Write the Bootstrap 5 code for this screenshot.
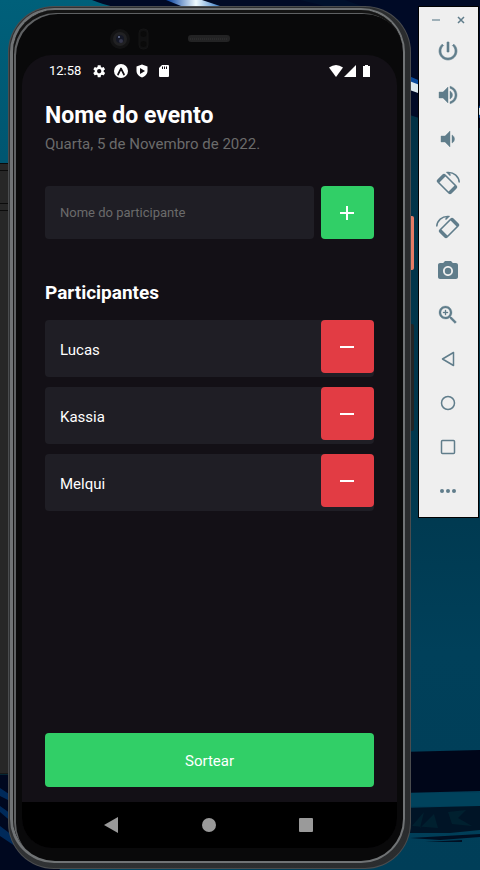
<!DOCTYPE html>
<html lang="pt-BR">
<head>
<meta charset="utf-8">
<meta name="viewport" content="width=device-width, initial-scale=1">
<title>Nome do evento</title>
<link href="https://cdn.jsdelivr.net/npm/bootstrap@5.3.0/dist/css/bootstrap.min.css" rel="stylesheet">
<style>
  body { font-family: Roboto, "Liberation Sans", sans-serif; background: #003a50; color: #fff; }
  .wallpaper { z-index: -1; }
  .desktop { padding: 6px 1px 1px 8px; gap: 7px; }

  .frame { background: #4a4c4e; padding: 1px; border-radius: 46px; }
  .rail { background: linear-gradient(90deg, #303234, #2a2c2e); padding: 1px 5px 5px 1px; border-radius: 45px; }
  .rim { background: #707375; padding: 2px 2px 2px 3px; border-radius: 44px; }
  .bezel { background: #09090a; padding: 0 6px 13px 9px; border-radius: 42px; box-shadow: inset 1px 3px 0 #141414, inset 3px 4px 0 #5f6163; }
  .sensors { height: 45px; }
  .side-key { left: 100%; width: 3px; border-radius: 0 2px 2px 0; }
  .key-power { top: 210px; height: 54px; background: #e57c66; }
  .key-volume { top: 318px; height: 107px; background: #222425; }

  .screen { background: #131016; border-radius: 30px; }
  .status { padding: 0 25px 0 27px; height: 32px; font-size: 13px; line-height: 20px; gap: 10px; }
  .app-body { padding: 15px 23px 15px; }
  .event-title { font-size: 23px; line-height: 28px; }
  .event-date { font-size: 15px; line-height: 20px; color: #6b6b6b; margin: 4px 0 32px; }
  .entry { gap: 7px; }
  .entry .form-control { height: 53px; padding: 0 15px; background: #1f1e25; border: 0; border-radius: 4px; color: #fff; font-size: 13px; }
  .entry .form-control::placeholder { color: #6b6b6b; opacity: 1; }
  .square-btn { width: 53px; height: 53px; border: 0; border-radius: 4px; }
  .add-btn { background: #31cf67; }
  .remove-btn { background: #e23c44; }
  .list-title { font-size: 19px; line-height: 24px; margin: 42px 0 15px; }
  .people { gap: 10px; }
  .person { height: 57px; background: #1f1e25; border-radius: 4px; padding-left: 15px; font-size: 15px; line-height: 60px; }
  .draw-btn { height: 54px; background: #31cf67; border: 0; border-radius: 4px; color: #fff; font-size: 15px; padding: 8px 0 6px; }
  .draw-btn:hover { background: #2bbd5d; color: #fff; }
  .sysnav { background: #000; height: 46px; padding: 0 42px 1px 40px; }
  .sysnav button, .tools button { background: none; border: 0; padding: 0; }

  .tools { width: 61px; background: #efefef; border: 1px solid #000; color: #607d8b; padding: 0 2px 4px 0; }
  .window-keys { height: 22px; padding: 3px 3px 0 4px; }
  .tool-btn { height: 44px; color: inherit; }
</style>
</head>
<body>
<svg class="wallpaper position-fixed top-0 start-0 w-100 h-100" viewBox="0 0 480 870" preserveAspectRatio="none" aria-hidden="true">
  <defs>
    <linearGradient id="sea" x1="0" y1="0" x2="0" y2="1"><stop offset="0" stop-color="#00607a"/><stop offset=".2" stop-color="#005570"/><stop offset=".6" stop-color="#003c54"/><stop offset="1" stop-color="#004560"/></linearGradient>
    <linearGradient id="east" x1="0" y1="0" x2="0" y2="1"><stop offset="0" stop-color="#002c3e"/><stop offset=".2" stop-color="#003348"/><stop offset=".55" stop-color="#00384e"/><stop offset=".75" stop-color="#00405a"/><stop offset="1" stop-color="#003e58"/></linearGradient>
    <linearGradient id="beam" x1="0" y1="0" x2="1" y2="0"><stop offset="0" stop-color="#003c9c"/><stop offset=".5" stop-color="#f0fbff"/><stop offset="1" stop-color="#0a5cb8"/></linearGradient>
  </defs>
  <rect width="480" height="870" fill="url(#sea)"/>
  <rect x="240" width="240" height="870" fill="url(#east)"/>
  <path d="M92 0H480V128Q440 126 400 112L150 14Q112 8 92 0z" fill="#000a26"/>
  <path d="M166 0H202L226 8H186z" fill="url(#beam)"/>
  <path d="M300 0Q380 18 410 50L400 20 345 0z" fill="#00102c"/>
  <path d="M404 74L480 106V118L404 86z" fill="#0a4a9a"/>
  <path d="M404 79L480 108V115L404 88z" fill="#dce9ee"/>
  <rect y="163" width="9" height="611" fill="#272727"/>
  <path d="M0 163.500H9M0 170.500H9M0 203.500H9M0 210.500H9M0 774H9" stroke="#0b0b0b"/>
  <path d="M0 775H9L60 870H0z" fill="#00081f"/>
  <path d="M0 788L12 796V802L0 796zM0 806L14 816V824L0 812zM0 826L24 844V852L0 836z" fill="#002a5a"/>
  <path d="M400 752L480 750V791L400 793z" fill="#000619"/>
  <path d="M400 793H480V806H400z" fill="#00425c"/>
  <path d="M400 808L480 806V830L450 833H400z" fill="#001426"/>
  <path d="M412 826L424 812L420 828L434 814L438 828zM448 812L466 810L458 818L472 826L452 824z" fill="#00202f"/>
  <path d="M410 838L480 834V837L440 840zM425 842L462 840V842z" fill="#000f22"/>
</svg>

<div class="desktop d-flex align-items-start min-vh-100">
  <div class="frame position-relative d-flex flex-column flex-fill align-self-stretch">
    <span class="side-key key-power position-absolute"></span>
    <span class="side-key key-volume position-absolute"></span>
    <div class="rail d-flex flex-column flex-fill">
      <div class="rim d-flex flex-column flex-fill">
        <div class="bezel d-flex flex-column flex-fill">
          <div class="sensors d-flex justify-content-center">
            <svg width="240" height="45" viewBox="0 0 240 45" aria-hidden="true">
              <circle cx="30" cy="29" r="10" fill="#131314"/><circle cx="30" cy="29" r="7" fill="#212123"/><circle cx="30" cy="29" r="4" fill="#141725"/><circle cx="31" cy="31" r="2" fill="#34364a"/><circle cx="29" cy="27" r="1" fill="#6d7899"/>
              <rect x="49" y="19" width="9" height="20" rx="4" fill="#101011" stroke="#141415"/><circle cx="53.500" cy="24" r="3" fill="#0a0a0a"/><circle cx="53.500" cy="34" r="3" fill="#0a0a0a"/>
              <rect x="98" y="25" width="42" height="7" rx="3" fill="#232324"/><path d="M100 29h38" stroke="#2b2b2c" stroke-width="2" stroke-dasharray="1 1"/>
            </svg>
          </div>

          <div class="screen d-flex flex-column flex-fill overflow-hidden">
            <div class="status d-flex align-items-center">
              <span>12:58</span>
              <svg width="84" height="16" viewBox="0 0 84 16" fill="#fff" aria-hidden="true">
                <g transform="translate(1 1) scale(.6)"><path d="M19.430 12.980c.04-.32.07-.64.07-.98s-.03-.66-.07-.98l2.110-1.650c.19-.15.24-.42.12-.64l-2-3.460c-.12-.22-.39-.3-.61-.22l-2.490 1c-.52-.4-1.080-.73-1.690-.98l-.38-2.650C14.460 2.180 14.250 2 14 2h-4c-.25 0-.46.18-.49.42l-.38 2.650c-.61.25-1.170.59-1.690.98l-2.490-1c-.23-.09-.49 0-.61.22l-2 3.460c-.13.22-.07.49.12.64l2.110 1.650c-.04.32-.07.65-.07.98s.03.66.07.98l-2.110 1.650c-.19.15-.24.42-.12.64l2 3.460c.12.22.39.3.61.22l2.490-1c.52.4 1.080.73 1.690.98l.38 2.650c.03.24.24.42.49.42h4c.25 0 .46-.18.49-.42l.38-2.650c.61-.25 1.170-.59 1.690-.98l2.490 1c.23.09.49 0 .61-.22l2-3.460c.12-.22.07-.49-.12-.64l-2.110-1.650zM12 15.500c-1.930 0-3.500-1.570-3.500-3.500s1.570-3.500 3.500-3.500 3.500 1.570 3.500 3.500-1.570 3.500-3.500 3.500z"/></g>
                <circle cx="30" cy="8" r="7"/><path d="M27 11.500L30 5.500L33 11.500" fill="none" stroke="#131016" stroke-width="1.700" stroke-linecap="round" stroke-linejoin="round"/>
                <path d="M51 1.500L56.500 3.500V8C56.500 11 54 13.500 51 14.500C48 13.500 45.500 11 45.500 8V3.500z"/><path d="M49 5L54 8L49 11z" fill="#131016"/>
                <path d="M71 2h6a1 1 0 0 1 1 1v10a1 1 0 0 1-1 1h-8a1 1 0 0 1-1-1V5z"/><path d="M71.500 3.500v2.500M73.500 3.500v2.500M75.500 3.500v2.500" stroke="#131016"/>
              </svg>
              <svg class="ms-auto" width="43" height="14" viewBox="0 0 43 14" fill="#fff" aria-hidden="true"><path d="M0 3.500Q7 -1.500 14 3.500L7 13z"/><path d="M15 13L27 1V13z"/><path d="M34 2h2V1h3v1h2v11h-7z"/></svg>
            </div>

            <main class="app-body d-flex flex-column flex-fill">
              <h1 class="event-title fw-bold m-0">Nome do evento</h1>
              <p class="event-date">Quarta, 5 de Novembro de 2022.</p>
              <form class="entry d-flex" onsubmit="return false">
                <input type="text" class="form-control flex-fill" placeholder="Nome do participante" aria-label="Nome do participante">
                <button type="button" class="square-btn add-btn flex-shrink-0 d-flex align-items-center justify-content-center p-0" aria-label="Adicionar"><svg width="15" height="15" viewBox="0 0 15 15" stroke="#fff" stroke-width="2"><path d="M7 1V15M0 8H14"/></svg></button>
              </form>
              <h2 class="list-title fw-bold">Participantes</h2>
              <ul class="people list-unstyled d-flex flex-column mb-4">
                <li class="person d-flex justify-content-between"><span>Lucas</span><button type="button" class="square-btn remove-btn d-flex align-items-center justify-content-center p-0" aria-label="Remover Lucas"><svg width="15" height="15" viewBox="0 0 15 15" stroke="#fff" stroke-width="2"><path d="M0 8H14"/></svg></button></li>
                <li class="person d-flex justify-content-between"><span>Kassia</span><button type="button" class="square-btn remove-btn d-flex align-items-center justify-content-center p-0" aria-label="Remover Kassia"><svg width="15" height="15" viewBox="0 0 15 15" stroke="#fff" stroke-width="2"><path d="M0 8H14"/></svg></button></li>
                <li class="person d-flex justify-content-between"><span>Melqui</span><button type="button" class="square-btn remove-btn d-flex align-items-center justify-content-center p-0" aria-label="Remover Melqui"><svg width="15" height="15" viewBox="0 0 15 15" stroke="#fff" stroke-width="2"><path d="M0 8H14"/></svg></button></li>
              </ul>
              <button type="button" class="draw-btn btn w-100 mt-auto">Sortear</button>
            </main>

            <nav class="sysnav d-flex" aria-label="Sistema">
              <button type="button" class="flex-fill" aria-label="Voltar"><svg width="16" height="16" viewBox="0 0 16 16" fill="#9a9a9a"><path d="M1 8L15 0V16z"/></svg></button>
              <button type="button" class="flex-fill" aria-label="Início"><svg width="16" height="16" viewBox="0 0 16 16" fill="#9a9a9a"><circle cx="8" cy="8" r="7"/></svg></button>
              <button type="button" class="flex-fill" aria-label="Recentes"><svg width="16" height="16" viewBox="0 0 16 16" fill="#9a9a9a"><rect x="1" y="1" width="14" height="14" rx="1"/></svg></button>
            </nav>
          </div>
        </div>
      </div>
    </div>
  </div>

  <aside class="tools d-flex flex-column flex-shrink-0" aria-label="Emulador">
    <div class="window-keys d-flex align-items-center">
      <button type="button" class="flex-fill d-flex justify-content-center" aria-label="Minimizar"><svg width="8" height="8" viewBox="0 0 8 8"><path d="M0 4H8" stroke="#9fb0b8" stroke-width="2"/></svg></button>
      <button type="button" class="flex-fill d-flex justify-content-center" aria-label="Fechar"><svg width="8" height="8" viewBox="0 0 8 8"><path d="M1 1L7 7M7 1L1 7" stroke="#607d8b" stroke-width="1.500"/></svg></button>
    </div>
    <button type="button" class="tool-btn" aria-label="Energia"><svg width="24" height="24" viewBox="0 0 24 24" fill="currentColor"><path d="M13 3h-2v10h2V3zm4.830 2.170l-1.420 1.420C17.990 7.860 19 9.810 19 12c0 3.870-3.130 7-7 7s-7-3.130-7-7c0-2.190 1.010-4.140 2.580-5.420L6.170 5.170C4.230 6.820 3 9.260 3 12c0 4.970 4.030 9 9 9s9-4.030 9-9c0-2.740-1.230-5.180-3.170-6.830z" stroke="currentColor" stroke-width=".6"/></svg></button>
    <button type="button" class="tool-btn" aria-label="Aumentar volume"><svg width="24" height="24" viewBox="0 0 24 24" fill="currentColor"><path d="M3 9v6h4l5 5V4L7 9H3zm13.500 3c0-1.770-1.020-3.290-2.500-4.030v8.050c1.480-.73 2.500-2.250 2.500-4.020zM14 3.230v2.060c2.890.86 5 3.540 5 6.710s-2.110 5.850-5 6.710v2.060c4.010-.91 7-4.490 7-8.770s-2.990-7.860-7-8.770z" stroke="currentColor" stroke-width=".4"/></svg></button>
    <button type="button" class="tool-btn" aria-label="Diminuir volume"><svg width="24" height="24" viewBox="0 0 24 24" fill="currentColor"><path d="M18.500 12c0-1.770-1.020-3.290-2.500-4.030v8.050c1.480-.73 2.500-2.250 2.500-4.020zM5 9v6h4l5 5V4L9 9H5z" stroke="currentColor" stroke-width=".4"/></svg></button>
    <button type="button" class="tool-btn" aria-label="Girar à esquerda"><svg width="26" height="26" viewBox="-1 -1 26 26" fill="none" stroke="currentColor"><path d="M2 9L7 4Q8 3 9 4L20 15Q21 16 20 17L15 22Q14 23 13 22L2 11Q1 10 2 9z" stroke-width="1.600"/><path d="M13 22L20 15M2 11L9 4" stroke-width="2.600"/><path d="M14.500 4.500L11.500 1.500C18 1 23 5.500 23.300 11.500" stroke-width="1.500"/></svg></button>
    <button type="button" class="tool-btn" aria-label="Girar à direita"><svg width="26" height="26" viewBox="-1 -1 26 26" fill="none" stroke="currentColor"><g transform="matrix(-1 0 0 1 24 0)"><path d="M2 9L7 4Q8 3 9 4L20 15Q21 16 20 17L15 22Q14 23 13 22L2 11Q1 10 2 9z" stroke-width="1.600"/><path d="M13 22L20 15M2 11L9 4" stroke-width="2.600"/><path d="M14.500 4.500L11.500 1.500C18 1 23 5.500 23.300 11.500" stroke-width="1.500"/></g></svg></button>
    <button type="button" class="tool-btn" aria-label="Captura de tela"><svg width="24" height="24" viewBox="0 0 24 24" fill="currentColor"><circle cx="12" cy="12" r="3.200"/><path d="M9 2L7.170 4H4c-1.100 0-2 .9-2 2v12c0 1.100.9 2 2 2h16c1.100 0 2-.9 2-2V6c0-1.100-.9-2-2-2h-3.170L15 2H9zm3 15c-2.760 0-5-2.240-5-5s2.240-5 5-5 5 2.240 5 5-2.240 5-5 5z"/></svg></button>
    <button type="button" class="tool-btn" aria-label="Zoom"><svg width="24" height="24" viewBox="0 0 24 24" fill="currentColor"><path d="M15.500 14h-.79l-.28-.27C15.410 12.590 16 11.110 16 9.500 16 5.910 13.090 3 9.500 3S3 5.910 3 9.500 5.910 16 9.500 16c1.610 0 3.090-.59 4.230-1.570l.27.28v.79l5 4.990L20.490 19l-4.990-5zm-6 0C7.010 14 5 11.990 5 9.500S7.010 5 9.500 5 14 7.010 14 9.500 11.990 14 9.500 14zm2.500-4h-2v2H9v-2H7V9h2V7h1v2h2v1z" stroke="currentColor" stroke-width=".3"/></svg></button>
    <button type="button" class="tool-btn" aria-label="Voltar"><svg width="24" height="24" viewBox="0 0 24 24" fill="none" stroke="currentColor" stroke-width="1.500" stroke-linejoin="round"><path d="M6.500 12L17.500 5.500V18.500z"/></svg></button>
    <button type="button" class="tool-btn" aria-label="Início"><svg width="24" height="24" viewBox="0 0 24 24" fill="none" stroke="currentColor" stroke-width="1.500"><circle cx="12" cy="12" r="6.500"/></svg></button>
    <button type="button" class="tool-btn" aria-label="Visão geral"><svg width="24" height="24" viewBox="0 0 24 24" fill="none" stroke="currentColor" stroke-width="1.500"><rect x="5.500" y="5.500" width="13" height="13" rx="1"/></svg></button>
    <button type="button" class="tool-btn" aria-label="Mais"><svg width="24" height="24" viewBox="0 0 24 24" fill="currentColor"><circle cx="6" cy="12" r="2"/><circle cx="12" cy="12" r="2"/><circle cx="18" cy="12" r="2"/></svg></button>
  </aside>
</div>
<script src="https://cdn.jsdelivr.net/npm/bootstrap@5.3.0/dist/js/bootstrap.bundle.min.js"></script>
</body>
</html>
